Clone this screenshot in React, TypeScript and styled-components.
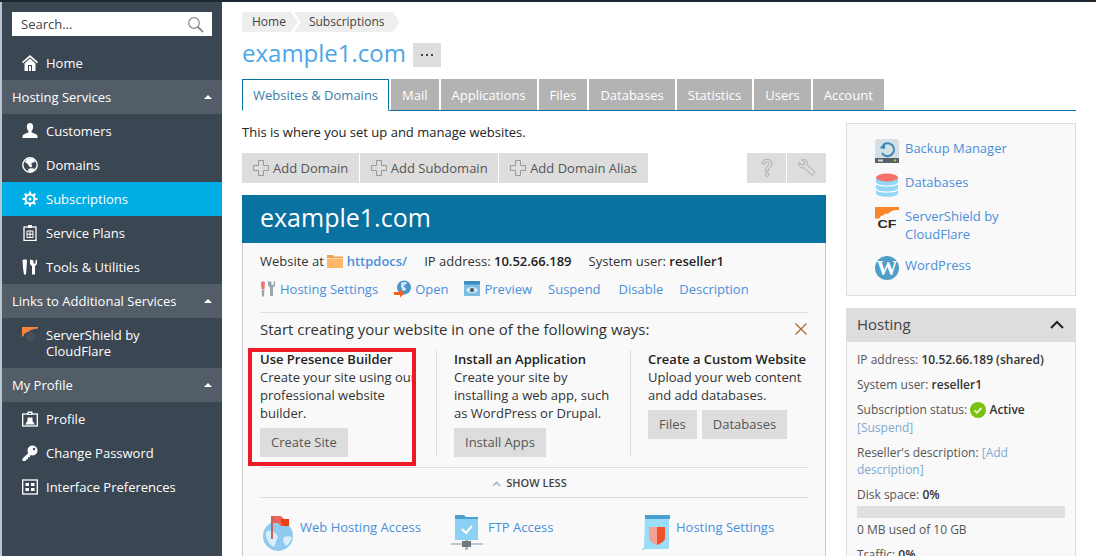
import React from "react";
import styled, { createGlobalStyle } from "styled-components";

const Global = createGlobalStyle`
  html, body { margin: 0; padding: 0; height: 100%; overflow: hidden; background: #fff; }
  body { font-family: "Open Sans", "Liberation Sans", sans-serif; font-size: 13px; color: #333; }
  * { box-sizing: border-box; }
`;

const Page = styled.div`
  position: relative; width: 1096px; height: 556px; overflow: hidden;
  display: flex; border-top: 2px solid #1c2731;
`;
const Sidebar = styled.nav`
  width: 222px; flex: none; background: #3a4652; border-left: 2px solid #b9c6d1;
  padding-top: 10px; color: #fff;
`;
const SearchBox = styled.div`
  margin: 0 10px 10px; height: 24px; background: #fff; display: flex; align-items: center;
  justify-content: space-between; padding: 0 8px 0 9px; color: #444; font-size: 13px;
`;
const NavItem = styled.div<{ $active?: boolean }>`
  display: flex; align-items: flex-start; gap: 8px; padding: 9px 10px 9px 20px; line-height: 16px;
  background: ${(p) => (p.$active ? "#00ade5" : "transparent")};
  min-height: 34px;
  & > span:first-child { width: 16px; height: 16px; flex: none; display: block; }
  & svg { display: block; }
`;
const NavHeader = styled.div`
  height: 34px; background: #525d68; display: flex; align-items: center;
  justify-content: space-between; padding: 0 10px;
`;
const Caret = styled.span`
  width: 0; height: 0; border-left: 4px solid transparent; border-right: 4px solid transparent;
  border-bottom: 4px solid #fff;
`;
const Main = styled.main`
  flex: 1; min-width: 0; padding: 10px 20px 0;
`;
const Crumbs = styled.div`
  display: flex; height: 20px; font-size: 12px; color: #444; line-height: 20px;
`;
const Crumb = styled.div<{ $first?: boolean }>`
  background: #eee; padding: ${(p) => (p.$first ? "0 12px 0 10px" : "0 15px 0 15px")};
  margin-left: ${(p) => (p.$first ? "0" : "-4px")};
  clip-path: ${(p) =>
    p.$first
      ? "polygon(0 0, calc(100% - 7px) 0, 100% 50%, calc(100% - 7px) 100%, 0 100%)"
      : "polygon(0 0, calc(100% - 7px) 0, 100% 50%, calc(100% - 7px) 100%, 0 100%, 7px 50%)"};
`;
const TitleRow = styled.div`
  display: flex; align-items: flex-start; gap: 7px; height: 24px; margin-top: 11px;
`;
const PageTitle = styled.h1`
  margin: 0; font-size: 24px; font-weight: 400; color: #4da6e8; line-height: 20px;
`;
const MoreButton = styled.div`
  width: 28px; height: 24px; background: #ddd; display: flex; align-items: center;
  justify-content: center; gap: 3px;
  & i { width: 2px; height: 2px; background: #444; display: block; }
`;
const Tabs = styled.div`
  display: flex; gap: 2px; margin-top: 12px; height: 32px; border-bottom: 1px solid #0a72a0;
`;
const Tab = styled.div<{ $active?: boolean }>`
  height: ${(p) => (p.$active ? "32px" : "31px")}; padding: ${(p) => (p.$active ? "0 10px" : "0 11px")};
  line-height: ${(p) => (p.$active ? "31px" : "33px")}; font-size: 13px;
  background: ${(p) => (p.$active ? "#fff" : "#b3b3b3")};
  color: ${(p) => (p.$active ? "#3b7ea8" : "#fff")};
  border: ${(p) => (p.$active ? "1px solid #0a72a0" : "0")};
  border-bottom: ${(p) => (p.$active ? "1px solid #fff" : "0")};
`;
const Columns = styled.div`
  display: flex; gap: 20px; align-items: flex-start;
`;
const LeftCol = styled.div`
  width: 584px; flex: none;
`;
const RightCol = styled.aside`
  width: 230px; flex: none; padding-top: 12px;
`;
const Intro = styled.p`
  margin: 12px 0 0; line-height: 18px; color: #222;
`;
const ToolBar = styled.div`
  display: flex; justify-content: space-between; margin-top: 12px;
`;
const BtnGroup = styled.div`
  display: flex; gap: 1px;
`;
const ToolBtn = styled.div`
  height: 30px; background: #ddd; display: flex; align-items: center; gap: 4px; color: #555;
  padding: 0 10.5px 0 11px; font-size: 13px;
`;
const IconBtn = styled.div`
  width: 39px; height: 30px; background: #ddd; display: flex; align-items: center; justify-content: center;
`;
const Panel = styled.section`
  margin-top: 12px;
`;
const PanelHead = styled.div`
  height: 48px; background: #0a72a0; color: #fff; font-size: 25px; line-height: 44px; padding-left: 18px;
`;
const PanelBody = styled.div`
  background: #f9f9f9; border: 1px solid #ccc; border-top: 0; padding: 9px 17px 0; height: 330px;
`;
const InfoRow = styled.div`
  display: flex; align-items: center; height: 18px; color: #333;
  & b { font-weight: 600; color: #222; }
  & svg { vertical-align: -2px; }
`;
const InfoPart = styled.span`
  display: inline-block; margin-right: 17px;
`;
const LinkA = styled.span`
  color: #4a90d9; font-weight: 600;
`;
const ActionRow = styled.div`
  display: flex; align-items: center; margin-top: 10px; height: 18px; gap: 16px;
`;
const ActionLink = styled.span`
  display: inline-flex; align-items: center; gap: 4px; color: #4a90d9;
  &:nth-child(5) { margin-left: 2px; }
`;
const Hr = styled.div<{ $mt?: number }>`
  height: 1px; background: #ddd; margin-top: ${(p) => p.$mt ?? 0}px;
`;
const StartHead = styled.div`
  display: flex; justify-content: space-between; align-items: center; font-size: 15px; color: #333;
  margin-top: 6px; height: 20px; padding-right: 1px;
`;
const Ways = styled.div`
  display: flex; margin-top: 11px; height: 107px; margin-bottom: 10px;
`;
const Way = styled.div<{ $first?: boolean; $w?: number }>`
  width: ${(p) => p.$w ?? 194}px; flex: none; padding-left: ${(p) => (p.$first ? "0" : "17px")};
  border-left: ${(p) => (p.$first ? "0" : "1px solid #ddd")};
  line-height: 18px; color: #333; height: 107px;
  white-space: nowrap;
  & h4 { margin: 0; font-size: 13px; font-weight: 600; color: #222; line-height: 18px; }
  & p { margin: 0; }
`;
const WayBtns = styled.div`
  display: flex; gap: 5px; margin-top: 6px;
`;
const WayBtn = styled.div`
  height: 29px; background: #ddd; color: #555; line-height: 29px; padding: 0 11px;
`;
const ShowLess = styled.div`
  height: 29px; display: flex; align-items: center; justify-content: center; gap: 5px; font-size: 11px;
  font-weight: 600; color: #444; padding-right: 9px;
`;
const Shortcuts = styled.div`
  display: flex; margin: 17px 0 0 2px; color: #4a90d9;
`;
const Shortcut = styled.div`
  width: 189px; flex: none; display: flex; gap: 6px; line-height: 18px; align-items: flex-start;
  & span { padding-top: 3px; }
  &:nth-child(2) { gap: 5px; }
`;
const SideBox = styled.div`
  background: #f9f9f9; border: 1px solid #ddd; height: 173px; padding: 15px 0 0 28px;
`;
const SideLink = styled.div<{ $mb?: number }>`
  display: flex; gap: 6px; margin-bottom: ${(p) => p.$mb ?? 10}px; line-height: 18px; color: #4a90d9;
  & svg { flex: none; display: block; }
`;
const HostHead = styled.div`
  margin-top: 12px; height: 34px; background: #ddd; display: flex; align-items: center;
  justify-content: space-between; padding: 0 12px 2px 11px; font-size: 15px; color: #444;
`;
const HostBody = styled.div`
  background: #f9f9f9; border: 1px solid #ddd; border-top: 0; padding: 9px 10px 0; font-size: 12px;
  color: #555; height: 240px;
  & b { font-weight: 600; color: #333; }
`;
const HostRow = styled.div`
  line-height: 17.5px; margin-bottom: 7.5px;
`;
const HostLink = styled.span`
  color: #7ea9cf;
`;
const Bar = styled.div`
  height: 12px; background: #e0e0e0; margin: -5px 0 3px;
`;
const RedFrame = styled.div`
  position: absolute; left: 248px; top: 346px; width: 168px; height: 118px; border: 4px solid #ed1c24;
  pointer-events: none;
`;

const W = ({ children }: { children: React.ReactNode }) => (
  <svg width={16} height={16} viewBox="0 0 16 16">{children}</svg>
);

const HomeI = () => <W><path d="M8 0 0 7l1 1.200L8 2.200l7 6L16 7z" fill="#fff" /><path d="M2.500 8.500 8 3.600l5.500 4.900V16H10v-6H6v6H2.500z" fill="#fff" /><rect x="7" y="11" width="2" height="5" fill="#fff" /></W>;
const PersonI = () => <W><path d="M8 0c2 0 3.200 1.500 3.200 3.700 0 1.800-.8 3.300-1.600 4.200v1.600c1.700.8 5.400 1.400 5.900 3.500V15H.5v-2c.5-2.100 4.200-2.700 5.900-3.500V7.900C5.600 7 4.800 5.500 4.800 3.700 4.800 1.500 6 0 8 0z" fill="#fff" /></W>;
const GlobeI = () => <W><circle cx="8" cy="8" r="7.200" fill="none" stroke="#fff" strokeWidth="1.400" /><path d="M5 2c3-1 5-1 7 .5L13 5c-1 .5-3 0-3.500 1.500S11 9 9.500 10 7 9 6 7.500 3.500 6 3 5zM6 12c2-1 5-1 7 0-1 2-3 3-5 3-1 0-2-2-2-3z" fill="#fff" /></W>;
const GearI = () => <W><circle cx="8" cy="8" r="4.500" fill="none" stroke="#fff" strokeWidth="2" /><circle cx="8" cy="8" r="1.500" fill="#fff" /><path d="M8 .5v3M8 12.500v3M.5 8h3M12.500 8h3M2.700 2.700l2.100 2.100M11.200 11.200l2.100 2.100M2.700 13.300l2.100-2.100M11.200 4.800l2.100-2.100" stroke="#fff" strokeWidth="2" /></W>;
const PlanI = () => <W><rect x="2" y="2" width="12" height="13.500" fill="none" stroke="#fff" strokeWidth="1.300" /><rect x="6" y="0" width="4" height="3" fill="#fff" /><path d="M5 6h6v6.500H5zM8 6v6.500M5 9.200h6" fill="none" stroke="#fff" /></W>;
const ToolsI = () => <W><path d="M0.500 1.500C.5.200 5 .2 5 1.500L4.500 9 4 15.500H2L1 9z" fill="#fff" /><path d="M8 0v3.500c0 1.300.8 2.500 2 3v8c0 .8 3 .8 3 0v-8c1.200-.5 2-1.700 2-3V0l-1.500 1v3h-2V1z" fill="#fff" transform="translate(0 .5)" /></W>;
const ShieldNavI = () => <W><path d="M0 0h16v1.500C11 2 8 3 6 5 3.500 5.300 2 6.500 1.500 9 .9 9.200 .4 9.500 0 10z" fill="#f5853b" /><circle cx="8.500" cy="9.500" r="5" fill="#46505a" /></W>;
const ProfileI = () => <W><rect x="0.700" y="3" width="14.600" height="12" fill="none" stroke="#fff" strokeWidth="1.300" /><rect x="5.500" y="0.500" width="5" height="3.500" fill="#fff" /><path d="M3 13.500 5.500 10V6.500h5V10l2.500 3.500z" fill="#fff" /><rect x="7" y="2" width="2" height="1" fill="#3a4652" /></W>;
const KeyI = () => <W><circle cx="10.500" cy="5.500" r="5" fill="#fff" /><circle cx="12" cy="4" r="1.200" fill="#3a4652" /><path d="M7.500 7 .5 13.500V16h3l.8-1.500 1.500-.3.300-1.700 1.700-.5.800-2z" fill="#fff" /></W>;
const GridI = () => <W><rect x="0.700" y="1" width="14.600" height="14" fill="none" stroke="#fff" strokeWidth="1.300" /><path d="M3.500 4h3.500v3H3.500zM9 4h3.500v3H9zM3.500 9H7v3H3.500zM9 9h3.500v3H9z" fill="#fff" /></W>;
const SearchI = () => (
  <svg width="17" height="17" viewBox="0 0 17 17"><circle cx="7" cy="7" r="5.300" fill="none" stroke="#8a8a8a" strokeWidth="1.200" /><path d="m11 11 5 5" stroke="#8a8a8a" strokeWidth="1.800" /></svg>
);
const PlusI = () => (
  <svg width="16" height="16" viewBox="0 0 16 16"><path d="M5.500.5h5v5h5v5h-5v5h-5v-5h-5v-5h5z" fill="none" stroke="#999" /></svg>
);
const HelpI = () => (
  <svg width="12" height="18" viewBox="0 0 12 18"><path d="M1 5c0-6 10-6 10-.5 0 3.500-3.500 3.500-3.500 7.500H4.500C4.500 7.500 8 7 8 4.500 8 2 4 2.500 4 5z" fill="none" stroke="#aaa" /><circle cx="6" cy="15.500" r="1.800" fill="none" stroke="#aaa" /></svg>
);
const WrenchI = () => (
  <svg width="18" height="18" viewBox="0 0 18 18"><path d="M1 3.500 4 6l2-.5L6.500 3 3.700.8C6-.3 9 1 9 4c0 .7-.1 1-.3 1.500l7.600 7c1.500 1.700-1.400 4.500-3 3L6 8.700C3 9.700.2 7 1 3.500z" fill="none" stroke="#aaa" /></svg>
);
const FolderI = () => (
  <svg width="16" height="14" viewBox="0 0 16 14"><path d="M0 1h6l1 1.500h9V4H0z" fill="#f5a04a" /><path d="M0 4.500h16V14H0z" fill="#fdb868" /></svg>
);
const HostSetI = () => (
  <svg width="16" height="16" viewBox="0 0 16 16"><path d="M1 1.500C1 0 5 0 5 1.500L4.500 8H1.500z" fill="#f0736c" /><path d="M1.700 8.500h2.600L4 15.500H2z" fill="#9aa5ad" /><path d="M8 0v3.500c0 1.300.8 2.500 2 3v8.500h3V6.500c1.200-.5 2-1.700 2-3V0l-1.500 1v3h-2V1z" fill="#9aa5ad" /></svg>
);
const OpenI = () => (
  <svg width="17" height="18" viewBox="0 0 17 18"><circle cx="10" cy="7.500" r="7" fill="#4c95c8" /><path d="M7 3c2-1.500 5-1.500 6 0 0 2-3 1-3 3s3 2 2 4l-3 1c-1-2-2-3-2-5z" fill="#cfe6f5" /><path d="M0 12h6V9.500l4.500 4L6 17.500V15H0z" fill="#f2621f" /></svg>
);
const PreviewI = () => (
  <svg width="16" height="16" viewBox="0 0 16 16"><rect width="16" height="15" fill="#7cc0e6" /><rect width="16" height="3.500" fill="#3d8dbe" /><ellipse cx="8" cy="9" rx="5.500" ry="3" fill="#d9edf8" /><circle cx="8" cy="9" r="2.200" fill="#56646e" /></svg>
);
const CloseI = () => (
  <svg width="12" height="12" viewBox="0 0 12 12"><path d="m.5.500 11 11M11.500.500l-11 11" stroke="#a06a2e" strokeWidth="1.200" /></svg>
);
const CaretUp = () => (
  <svg width="9" height="6" viewBox="0 0 10 6"><path d="M0 6 5 1l5 5H7.500L5 3.500 2.500 6z" fill="#a8b2ba" /></svg>
);
const FlagGlobe = () => (
  <svg width="32" height="36" viewBox="0 0 32 36"><circle cx="16" cy="21" r="15" fill="#8ec9ee" /><path d="M4 17c4-3 7-1 9 1s4 3 2 6-1 6-3 8C7 30 3 23 4 17zM22 22c3-1 6-1 8 0-1 4-3 7-6 9-2-2-4-7-2-9z" fill="#d7edf9" /><rect x="9" y="1" width="2" height="23" fill="#c2645c" /><path d="M11 1h8l3 3h5v7h-8l-3-3h-5z" fill="#f2625c" /><path d="M19 4h8v7h-6l-2-3z" fill="#e8400f" /></svg>
);
const FtpI = () => (
  <svg width="32" height="36" viewBox="0 0 32 36"><path d="M4 0h9l2 2h12v5H4z" fill="#4a9fd0" /><rect x="4" y="4" width="23" height="21" fill="#8dd0f5" /><path d="m11 14 4 4 6-7" fill="none" stroke="#fff" strokeWidth="2" /><rect x="14" y="25" width="3" height="10" fill="#b0bac0" /><rect x="0" y="28" width="32" height="2" fill="#c0c8cc" /><rect x="11" y="26" width="9" height="6" fill="#6d7880" /></svg>
);
const HostDocI = () => (
  <svg width="30" height="36" viewBox="0 0 30 36"><path d="M5 2h24v32H5l-1 1H1l3-2z" fill="#9bdcf7" /><rect x="5" y="0" width="25" height="4" fill="#4a9fd0" /><path d="M9 12h16v11c0 3-4 5-8 7-4-2-8-4-8-7z" fill="#f4a191" /><path d="M17 12h8v11c0 3-4 5-8 7z" fill="#f2512d" /></svg>
);
const BackupI = () => (
  <svg width="24" height="24" viewBox="0 0 24 24"><path d="M2 0h20l2 2v17H0V2z" fill="#d5e0e6" /><rect y="19" width="24" height="5" fill="#556068" /><circle cx="20" cy="21.500" r="1.200" fill="#8ed13a" /><path d="M3 20.500h5v2H3z" fill="#cfd6da" /><path d="M8 6a6.500 6.500 0 1 1-1 8" fill="none" stroke="#3a88b5" strokeWidth="2" /><path d="M4.500 9 10 4v6z" fill="#3a88b5" /></svg>
);
const DbI = () => (
  <svg width="24" height="24" viewBox="0 0 24 24"><path d="M1 4v16c0 5 22 5 22 0V4z" fill="#92d6f8" /><ellipse cx="12" cy="4.500" rx="11" ry="4" fill="#f87168" /><path d="M1 10c1 4 21 4 22 0M1 16c1 4 21 4 22 0" fill="none" stroke="#fff" strokeWidth="1.200" /></svg>
);
const CfI = () => (
  <svg width="24" height="24" viewBox="0 0 24 24"><path d="M0 0h24v3c-5-.5-8 .5-11 4-2-.5-4 0-5 1.500-2 0-3 1-3.500 3H0z" fill="#f98628" /><text x="2.500" y="21" fontFamily="'Liberation Sans', sans-serif" fontWeight="700" fontSize="11" textLength="19" lengthAdjust="spacingAndGlyphs" fill="#2a2a2a">CF</text></svg>
);
const WpI = () => (
  <svg width="24" height="24" viewBox="0 0 24 24"><circle cx="12" cy="12" r="12" fill="#4f9ec6" /><text x="12" y="19" textAnchor="middle" fontFamily="'Liberation Serif', serif" fontWeight="700" fontSize="21" fill="#fff">W</text></svg>
);
const CheckCircle = () => (
  <svg width="16" height="16" viewBox="0 0 16 16" style={{ verticalAlign: "-4px" }}><circle cx="8" cy="8" r="8" fill="#7cc111" /><path d="m4.500 8.300 2.500 2.500 4.500-5" fill="none" stroke="#e9f7d0" strokeWidth="1.800" /></svg>
);
const ChevronUp = () => (
  <svg width="14" height="9" viewBox="0 0 14 9"><path d="m1 8 6-6 6 6" fill="none" stroke="#222" strokeWidth="2" /></svg>
);

const Item = ({ icon, label, active }: { icon: React.ReactNode; label: React.ReactNode; active?: boolean }) => (
  <NavItem $active={active}><span>{icon}</span><span>{label}</span></NavItem>
);
const Head = ({ label }: { label: string }) => (
  <NavHeader><span>{label}</span><Caret /></NavHeader>
);

export default function App() {
  return (
    <>
      <Global />
      <Page>
        <Sidebar>
          <SearchBox><span>Search...</span><SearchI /></SearchBox>
          <Item icon={<HomeI />} label="Home" />
          <Head label="Hosting Services" />
          <Item icon={<PersonI />} label="Customers" />
          <Item icon={<GlobeI />} label="Domains" />
          <Item icon={<GearI />} label="Subscriptions" active />
          <Item icon={<PlanI />} label="Service Plans" />
          <Item icon={<ToolsI />} label="Tools & Utilities" />
          <Head label="Links to Additional Services" />
          <Item icon={<ShieldNavI />} label={<>ServerShield by<br />CloudFlare</>} />
          <Head label="My Profile" />
          <Item icon={<ProfileI />} label="Profile" />
          <Item icon={<KeyI />} label="Change Password" />
          <Item icon={<GridI />} label="Interface Preferences" />
        </Sidebar>
        <Main>
          <Crumbs>
            <Crumb $first>Home</Crumb>
            <Crumb>Subscriptions</Crumb>
          </Crumbs>
          <TitleRow>
            <PageTitle>example1.com</PageTitle>
            <MoreButton><i /><i /><i /></MoreButton>
          </TitleRow>
          <Tabs>
            {["Websites & Domains", "Mail", "Applications", "Files", "Databases", "Statistics", "Users", "Account"].map((t, i) => (
              <Tab key={t} $active={i === 0}>{t}</Tab>
            ))}
          </Tabs>
          <Columns>
            <LeftCol>
              <Intro>This is where you set up and manage websites.</Intro>
              <ToolBar>
                <BtnGroup>
                  <ToolBtn><PlusI />Add Domain</ToolBtn>
                  <ToolBtn><PlusI />Add Subdomain</ToolBtn>
                  <ToolBtn><PlusI />Add Domain Alias</ToolBtn>
                </BtnGroup>
                <BtnGroup>
                  <IconBtn><HelpI /></IconBtn>
                  <IconBtn><WrenchI /></IconBtn>
                </BtnGroup>
              </ToolBar>
              <Panel>
                <PanelHead>example1.com</PanelHead>
                <PanelBody>
                  <InfoRow>
                    <InfoPart>Website at <FolderI /> <LinkA>httpdocs/</LinkA></InfoPart>
                    <InfoPart>IP address: <b>10.52.66.189</b></InfoPart>
                    <InfoPart>System user: <b>reseller1</b></InfoPart>
                  </InfoRow>
                  <ActionRow>
                    <ActionLink><HostSetI />Hosting Settings</ActionLink>
                    <ActionLink><OpenI />Open</ActionLink>
                    <ActionLink><PreviewI />Preview</ActionLink>
                    <ActionLink>Suspend</ActionLink>
                    <ActionLink>Disable</ActionLink>
                    <ActionLink>Description</ActionLink>
                  </ActionRow>
                  <Hr $mt={14} />
                  <StartHead><span>Start creating your website in one of the following ways:</span><CloseI /></StartHead>
                  <Ways>
                    <Way $first $w={176}>
                      <h4>Use Presence Builder</h4>
                      <p>Create your site using our<br />professional website<br />builder.</p>
                      <WayBtns><WayBtn>Create Site</WayBtn></WayBtns>
                    </Way>
                    <Way>
                      <h4>Install an Application</h4>
                      <p>Create your site by<br />installing a web app, such<br />as WordPress or Drupal.</p>
                      <WayBtns><WayBtn>Install Apps</WayBtn></WayBtns>
                    </Way>
                    <Way $w={178}>
                      <h4>Create a Custom Website</h4>
                      <p>Upload your web content<br />and add databases.</p>
                      <WayBtns><WayBtn>Files</WayBtn><WayBtn>Databases</WayBtn></WayBtns>
                    </Way>
                  </Ways>
                  <Hr />
                  <ShowLess><CaretUp />SHOW LESS</ShowLess>
                  <Hr />
                  <Shortcuts>
                    <Shortcut><FlagGlobe /><span>Web Hosting Access</span></Shortcut>
                    <Shortcut><FtpI /><span>FTP Access</span></Shortcut>
                    <Shortcut><HostDocI /><span>Hosting Settings</span></Shortcut>
                  </Shortcuts>
                </PanelBody>
              </Panel>
            </LeftCol>
            <RightCol>
              <SideBox>
                <SideLink><BackupI />Backup Manager</SideLink>
                <SideLink><DbI />Databases</SideLink>
                <SideLink $mb={13}><CfI /><span>ServerShield by<br />CloudFlare</span></SideLink>
                <SideLink><WpI />WordPress</SideLink>
              </SideBox>
              <HostHead>Hosting<ChevronUp /></HostHead>
              <HostBody>
                <HostRow>IP address: <b>10.52.66.189 (shared)</b></HostRow>
                <HostRow>System user: <b>reseller1</b></HostRow>
                <HostRow>Subscription status: <CheckCircle /> <b>Active</b><br /><HostLink>[Suspend]</HostLink></HostRow>
                <HostRow>Reseller's description: <HostLink>[Add<br />description]</HostLink></HostRow>
                <HostRow>Disk space: <b>0%</b></HostRow>
                <Bar />
                <HostRow>0 MB used of 10 GB</HostRow>
                <HostRow>Traffic: <b>0%</b></HostRow>
              </HostBody>
            </RightCol>
          </Columns>
        </Main>
        <RedFrame />
      </Page>
    </>
  );
}
